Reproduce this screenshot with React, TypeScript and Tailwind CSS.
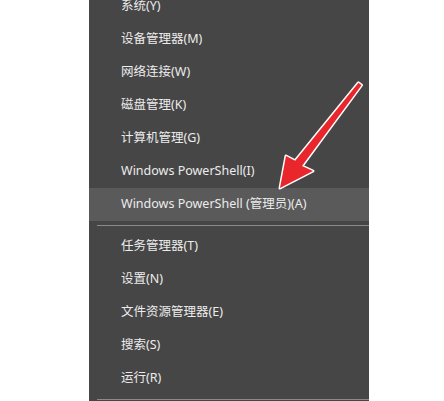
import React from 'react';

type Item = { label: string; active?: boolean };

const groupA: Item[] = [
  { label: '系统(Y)' },
  { label: '设备管理器(M)' },
  { label: '网络连接(W)' },
  { label: '磁盘管理(K)' },
  { label: '计算机管理(G)' },
  { label: 'Windows PowerShell(I)' },
  { label: 'Windows PowerShell (管理员)(A)', active: true },
];

const groupB: Item[] = [
  { label: '任务管理器(T)' },
  { label: '设置(N)' },
  { label: '文件资源管理器(E)' },
  { label: '搜索(S)' },
  { label: '运行(R)' },
];

function MenuRow({ item }: { item: Item }) {
  return (
    <div
      className={
        'flex items-center h-[33px] pl-[32px] text-[12.5px] text-[#ececec] ' +
        (item.active ? 'bg-[#5a5a5a]' : '')
      }
    >
      {item.label}
    </div>
  );
}

function Separator() {
  return (
    <div className="flex flex-col justify-center h-[9px] pl-[8px]">
      <div className="h-px bg-[#8a8a8a]" />
    </div>
  );
}

// red annotation arrow drawn on top of the screenshot
function Arrow() {
  return (
    <svg className="absolute inset-0 pointer-events-none" width="444" height="401" viewBox="0 0 444 401">
      <polygon
        points="361.5,85.2 302,166 313,171 280,188 286,156 295.2,160.8 358.5,82.8"
        fill="#e8262c"
        stroke="#ffffff"
        strokeWidth="3"
        strokeLinejoin="round"
        style={{ paintOrder: 'stroke' }}
      />
    </svg>
  );
}

export default function App() {
  return (
    <div
      className="relative w-[444px] h-[401px] overflow-hidden bg-white flex"
      style={{ fontFamily: '"Noto Sans", "Noto Sans CJK SC", sans-serif' }}
    >
      <div className="w-[89px] shrink-0" />
      <div className="w-[280px] shrink-0 bg-[#464646] flex flex-col">
        <div className="-mt-[10px]">
          {groupA.map((item, i) => (
            <MenuRow key={i} item={item} />
          ))}
        </div>
        <Separator />
        {groupB.map((item, i) => (
          <MenuRow key={i} item={item} />
        ))}
        <div className="h-[4px]" />
        <div className="h-px ml-[8px] bg-[#8a8a8a]" />
      </div>
      <Arrow />
    </div>
  );
}
